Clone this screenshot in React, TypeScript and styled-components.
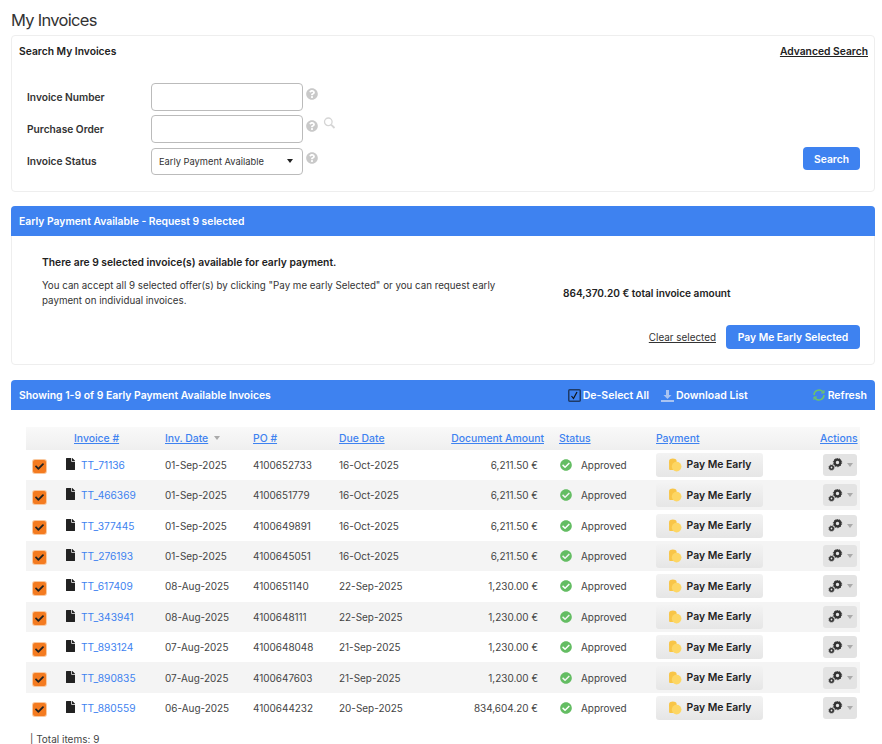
import styled, { createGlobalStyle } from "styled-components";
import { FaFile, FaCheck, FaCheckCircle, FaQuestionCircle } from "react-icons/fa";

const GlobalStyle = createGlobalStyle`
  html, body { margin: 0; padding: 0; background: #fff; }
  body { font-family: Inter, "Liberation Sans", sans-serif; color: #333; overflow: hidden; }
`;

const Page = styled.div`
  width: 882px;
  height: 744px;
  padding: 10px 7px 0 11px;
  box-sizing: border-box;
  overflow: hidden;
`;

const Title = styled.h1`
  margin: 0;
  height: 25px;
  font-size: 16.5px;
  line-height: 20px;
  font-weight: 400;
  letter-spacing: -0.7px;
  color: #333;
`;

const Card = styled.section`
  border: 1px solid #eeeeee;
  border-radius: 4px;
  box-sizing: border-box;
  background: #fff;
`;

const SearchCard = styled(Card)`
  height: 157px;
  padding: 9px 6px 0 7px;
`;

const SearchHead = styled.div`
  display: flex;
  justify-content: space-between;
  align-items: center;
  height: 12px;
`;

const CardTitle = styled.span`
  font-size: 10.3px;
  font-weight: 600;
  color: #222;
`;

const AdvancedLink = styled.a`
  font-size: 10.3px;
  font-weight: 600;
  color: #222;
  text-decoration: underline;
`;

const SearchBody = styled.div`
  display: flex;
  justify-content: space-between;
  align-items: flex-end;
  padding: 26px 8px 0 8px;
`;

const Form = styled.div`
  display: flex;
  flex-direction: column;
  gap: 4px;
`;

const FormRow = styled.div`
  display: flex;
  align-items: center;
  height: 28px;
`;

const Label = styled.label`
  width: 124px;
  font-size: 10.2px;
  font-weight: 600;
  color: #333;
`;

const TextBox = styled.div`
  width: 150px;
  height: 26px;
  border: 1px solid #bbb;
  border-radius: 4px;
  background: #fff;
`;

const SelectBox = styled(TextBox)`
  height: 25px;
  display: flex;
  align-items: center;
  justify-content: space-between;
  padding: 0 9px 0 7px;
  width: 134px;
  font-size: 9.3px;
  color: #333;
`;

const Caret = styled.span<{ $color?: string }>`
  width: 0;
  height: 0;
  border-left: 3px solid transparent;
  border-right: 3px solid transparent;
  border-top: 4px solid ${({ $color }) => $color ?? "#222"};
`;

const HelpIcon = styled(FaQuestionCircle)`
  width: 12px;
  height: 12px;
  color: #c9c9c9;
  margin: -7px 0 0 3px;
`;

const GlassIcon = styled.svg`
  width: 13px;
  height: 12px;
  margin: -12px 0 0 5px;
  fill: none;
  stroke: #d5d5d5;
`;

const BlueButton = styled.button`
  border: 0;
  border-radius: 4px;
  background: #3e82f0;
  color: #fff;
  font-family: inherit;
  font-size: 10.3px;
  font-weight: 600;
  height: 23px;
  padding: 0;
`;

const SearchButton = styled(BlueButton)`
  width: 57px;
  margin-bottom: 5px;
`;

const InfoCard = styled(Card)`
  margin-top: 14px;
  height: 159px;
  border-radius: 4px;
`;

const BlueBar = styled.header`
  display: flex;
  align-items: center;
  height: 30px;
  margin: -1px -1px 0;
  padding: 0 8px;
  background: #3e82f0;
  border-radius: 4px 4px 0 0;
  color: #fff;
  font-size: 10.35px;
  font-weight: 600;
`;

const InfoBody = styled.div`
  padding: 19px 14px 0 30px;
`;

const InfoHeading = styled.div`
  font-size: 10.3px;
  font-weight: 600;
  color: #222;
  line-height: 14px;
`;

const InfoRow = styled.div`
  display: flex;
  align-items: center;
  margin-top: 9px;
`;

const InfoText = styled.p`
  margin: 0;
  width: 475px;
  font-size: 9.75px;
  line-height: 15px;
  color: #333;
`;

const InfoTotal = styled.div`
  margin-left: 46px;
  font-size: 10.1px;
  font-weight: 600;
  color: #222;
`;

const InfoActions = styled.div`
  display: flex;
  justify-content: flex-end;
  align-items: center;
  gap: 10px;
  margin-top: 17px;
`;

const ClearLink = styled.a`
  font-size: 9.9px;
  color: #333;
  text-decoration: underline;
`;

const PayAllButton = styled(BlueButton)`
  width: 134px;
  height: 24px;
`;

const ListBar = styled(BlueBar)`
  margin: 15px 0 0;
  padding: 0 8px 0 8px;
  border-radius: 4px 4px 0 0;
`;

const BarTitle = styled.span`
  flex: 1;
  font-size: 10.4px;
`;

const BarAction = styled.span`
  display: flex;
  align-items: center;
  gap: 2px;
  margin-left: 12px;
  font-size: 10.5px;
`;

const RefreshAction = styled(BarAction)`
  margin-left: 64px;
`;

const Table = styled.div`
  margin: 17px 0 0 15px;
  width: 834px;
`;

const columns = "40px 99px 88px 86px 86px 120px 111px 1fr 40px";

const HeadRow = styled.div`
  display: grid;
  grid-template-columns: ${columns};
  align-items: center;
  height: 22.6px;
  background: linear-gradient(#f9f9f9, #efefef);
`;

const HeadLink = styled.a<{ $align?: string; $pad?: number }>`
  font-size: 10.4px;
  font-weight: 500;
  color: #3e82f0;
  text-decoration: underline;
  text-align: ${({ $align }) => $align ?? "left"};
  padding-left: ${({ $pad }) => $pad ?? 0}px;
`;

const HeadCell = styled.div`
  display: flex;
  align-items: center;
  gap: 6px;
`;

const AmountHead = styled(HeadLink)`
  margin: 0 1px 0 -10px;
  white-space: nowrap;
`;

const ActionsHead = styled(HeadLink)`
  margin-right: 3px;
`;

const Row = styled.div<{ $odd: boolean }>`
  display: grid;
  grid-template-columns: ${columns};
  align-items: center;
  height: 30.4px;
  background: ${({ $odd }) => ($odd ? "#f4f4f4" : "#fff")};
  font-size: 9.95px;
  color: #444;
`;

const Checkbox = styled.span`
  display: flex;
  align-items: center;
  justify-content: center;
  width: 13px;
  height: 13px;
  margin: 4px 0 0 7px;
  border-radius: 2px;
  background: #f47b20;
  box-shadow: 0 0 0 1px #f9c9a0;
  color: #222;
  font-size: 9px;
`;

const InvoiceCell = styled.div`
  display: flex;
  align-items: center;
  gap: 6px;
  font-size: 10.2px;
`;

const DocIcon = styled(FaFile)`
  width: 9px;
  height: 12px;
  color: #222;
  margin-top: -2px;
`;

const InvoiceLink = styled.a`
  color: #3e82f0;
`;

const Amount = styled.div`
  text-align: right;
  padding-right: 7px;
`;

const StatusCell = styled.div`
  display: flex;
  align-items: center;
  gap: 9px;
  margin-left: 15px;
`;

const StatusIcon = styled(FaCheckCircle)`
  width: 12px;
  height: 12px;
  color: #64bd63;
`;

const PayButton = styled.div`
  display: flex;
  align-items: center;
  justify-content: center;
  gap: 5px;
  width: 107px;
  height: 24px;
  border-radius: 3px;
  background: linear-gradient(#f3f3f3, #e6e6e6);
  font-size: 10.4px;
  font-weight: 600;
  color: #222;
`;

const ActionsButton = styled.div`
  display: flex;
  align-items: center;
  justify-content: center;
  gap: 4px;
  width: 34px;
  height: 22px;
  border-radius: 3px;
  background: #e3e3e3;
  justify-self: end;
  margin-right: 3px;
`;

const Footer = styled.div`
  margin: 10px 0 0 19px;
  font-size: 10px;
  line-height: 12px;
  color: #444;
`;

const RefreshIcon = () => (
  <svg width="14" height="14" viewBox="0 0 14 14" fill="none" stroke="#6cc46a" strokeWidth="1.5">
    <path d="M2 7a5 5 0 0 1 8.6-3.4L12 5" />
    <path d="M12 7a5 5 0 0 1-8.6 3.4L2 9" />
    <path d="M12 2v3H9" strokeWidth="1" />
    <path d="M2 12V9h3" strokeWidth="1" />
  </svg>
);

const CheckSquare = () => (
  <svg width="13" height="13" viewBox="0 0 13 13" fill="none">
    <rect x="0.75" y="0.75" width="11.5" height="11.5" rx="1" stroke="#1f3a66" strokeWidth="1.5" fill="#3e82f0" />
    <path d="M3.5 7l2 2.5L9 3" stroke="#111" strokeWidth="1.2" />
  </svg>
);

const DownloadIcon = () => (
  <svg width="13" height="13" viewBox="0 0 13 13" fill="#a9c4f2">
    <path d="M5 1h3v5h2.5l-4 4-4-4H5z" />
    <rect x="0" y="11" width="13" height="2" />
  </svg>
);

const CoinIcon = () => (
  <svg width="14" height="14" viewBox="0 0 13 13">
    <path d="M1 2.5C1 1.2 3 .5 4.5 .5S8 1.2 8 2.5V5H1z" fill="#f8c547" />
    <rect x="1" y="3.2" width="6" height="8" rx="1" fill="#f8c547" />
    <circle cx="8" cy="8" r="4.5" fill="#fdd663" />
  </svg>
);

const GearIcon = () => (
  <svg width="15" height="13" viewBox="0 0 15 13" fill="none" stroke="#333">
    <circle cx="9.5" cy="4.5" r="2.8" strokeWidth="2.2" />
    <circle cx="9.5" cy="4.5" r="4.2" strokeWidth="1" strokeDasharray="1.3 1.34" />
    <circle cx="3.5" cy="9.5" r="1.7" strokeWidth="1.6" />
    <circle cx="3.5" cy="9.5" r="2.7" strokeWidth="0.8" strokeDasharray="1 1.12" />
  </svg>
);

type Invoice = { id: string; date: string; po: string; due: string; amount: string };

const invoices: Invoice[] = [
  { id: "TT_71136", date: "01-Sep-2025", po: "4100652733", due: "16-Oct-2025", amount: "6,211.50 €" },
  { id: "TT_466369", date: "01-Sep-2025", po: "4100651779", due: "16-Oct-2025", amount: "6,211.50 €" },
  { id: "TT_377445", date: "01-Sep-2025", po: "4100649891", due: "16-Oct-2025", amount: "6,211.50 €" },
  { id: "TT_276193", date: "01-Sep-2025", po: "4100645051", due: "16-Oct-2025", amount: "6,211.50 €" },
  { id: "TT_617409", date: "08-Aug-2025", po: "4100651140", due: "22-Sep-2025", amount: "1,230.00 €" },
  { id: "TT_343941", date: "08-Aug-2025", po: "4100648111", due: "22-Sep-2025", amount: "1,230.00 €" },
  { id: "TT_893124", date: "07-Aug-2025", po: "4100648048", due: "21-Sep-2025", amount: "1,230.00 €" },
  { id: "TT_890835", date: "07-Aug-2025", po: "4100647603", due: "21-Sep-2025", amount: "1,230.00 €" },
  { id: "TT_880559", date: "06-Aug-2025", po: "4100644232", due: "20-Sep-2025", amount: "834,604.20 €" },
];

const App = () => (
  <Page>
    <GlobalStyle />
    <Title>My Invoices</Title>
    <SearchCard>
      <SearchHead>
        <CardTitle>Search My Invoices</CardTitle>
        <AdvancedLink>Advanced Search</AdvancedLink>
      </SearchHead>
      <SearchBody>
        <Form>
          <FormRow>
            <Label>Invoice Number</Label>
            <TextBox />
            <HelpIcon />
          </FormRow>
          <FormRow>
            <Label>Purchase Order</Label>
            <TextBox />
            <HelpIcon />
            <GlassIcon viewBox="0 0 12 12">
              <circle cx="4.8" cy="4.8" r="3.8" strokeWidth="1.3" />
              <path d="M7.6 7.6L11 11" strokeWidth="1.8" />
            </GlassIcon>
          </FormRow>
          <FormRow>
            <Label>Invoice Status</Label>
            <SelectBox>
              Early Payment Available
              <Caret />
            </SelectBox>
            <HelpIcon />
          </FormRow>
        </Form>
        <SearchButton>Search</SearchButton>
      </SearchBody>
    </SearchCard>

    <InfoCard>
      <BlueBar>Early Payment Available - Request 9 selected</BlueBar>
      <InfoBody>
        <InfoHeading>There are 9 selected invoice(s) available for early payment.</InfoHeading>
        <InfoRow>
          <InfoText>
            You can accept all 9 selected offer(s) by clicking "Pay me early Selected" or you can request early
            payment on individual invoices.
          </InfoText>
          <InfoTotal>864,370.20 € total invoice amount</InfoTotal>
        </InfoRow>
        <InfoActions>
          <ClearLink>Clear selected</ClearLink>
          <PayAllButton>Pay Me Early Selected</PayAllButton>
        </InfoActions>
      </InfoBody>
    </InfoCard>

    <ListBar>
      <BarTitle>Showing 1-9 of 9 Early Payment Available Invoices</BarTitle>
      <BarAction>
        <CheckSquare />
        De-Select All
      </BarAction>
      <BarAction>
        <DownloadIcon />
        Download List
      </BarAction>
      <RefreshAction>
        <RefreshIcon />
        Refresh
      </RefreshAction>
    </ListBar>

    <Table>
      <HeadRow>
        <span />
        <HeadLink $pad={8}>Invoice #</HeadLink>
        <HeadCell>
          <HeadLink>Inv. Date</HeadLink>
          <Caret $color="#aaa" />
        </HeadCell>
        <HeadLink>PO #</HeadLink>
        <HeadLink>Due Date</HeadLink>
        <AmountHead $align="right">Document Amount</AmountHead>
        <HeadLink $pad={14}>Status</HeadLink>
        <HeadLink>Payment</HeadLink>
        <ActionsHead $align="right">Actions</ActionsHead>
      </HeadRow>
      {invoices.map((invoice, i) => (
        <Row key={invoice.id} $odd={i % 2 === 1}>
          <Checkbox>
            <FaCheck />
          </Checkbox>
          <InvoiceCell>
            <DocIcon />
            <InvoiceLink>{invoice.id}</InvoiceLink>
          </InvoiceCell>
          <div>{invoice.date}</div>
          <div>{invoice.po}</div>
          <div>{invoice.due}</div>
          <Amount>{invoice.amount}</Amount>
          <StatusCell>
            <StatusIcon />
            Approved
          </StatusCell>
          <PayButton>
            <CoinIcon />
            Pay Me Early
          </PayButton>
          <ActionsButton>
            <GearIcon />
            <Caret $color="#aaa" />
          </ActionsButton>
        </Row>
      ))}
    </Table>
    <Footer>| Total items: 9</Footer>
  </Page>
);

export default App;
